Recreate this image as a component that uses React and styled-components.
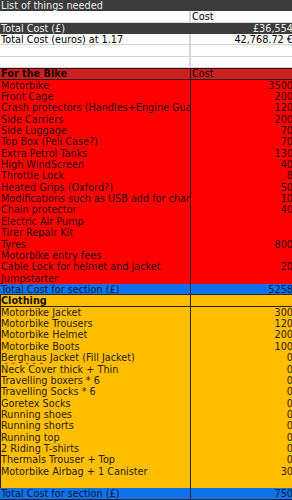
import React from "react";
import styled, { createGlobalStyle, css } from "styled-components";

const GlobalStyle = createGlobalStyle`
  html, body {
    margin: 0;
    padding: 0;
    background: #ffffff;
    overflow: hidden;
  }
`;

const tones = {
  title: { bg: "#3c3c3c", fg: "#ececec", divider: "transparent" },
  blank: { bg: "#ffffff", fg: "#000000", divider: "#d6d6d6", line: "#d6d6d6" },
  dark: { bg: "#3c3c3c", fg: "#ececec", divider: "transparent" },
  head: { bg: "#c9211e", fg: "#1a0000", divider: "#3a0a0a", top: "#3a0a0a", line: "#3a0a0a" },
  bike: { bg: "#ff0000", fg: "#2a0000", divider: "#3a0a0a" },
  total: { bg: "#1071ec", fg: "#001a3a", divider: "#2a2a2a", line: "#2a2a2a" },
  section: { bg: "#ffbf00", fg: "#1a1200", divider: "#2a2200", line: "#2a2200", left: "#2a2200" },
  cloth: { bg: "#ffbf00", fg: "#2a2000", divider: "#2a2200", left: "#2a2200" },
};

const bike = [
  { label: "Motorbike", value: "3500" },
  { label: "Front Cage", value: "200" },
  { label: "Crash protectors (Handles+Engine Guards)", value: "120" },
  { label: "Side Carriers", value: "200" },
  { label: "Side Luggage", value: "70" },
  { label: "Top Box (Peli Case?)", value: "70" },
  { label: "Extra Petrol Tanks", value: "130" },
  { label: "High WindScreen", value: "40" },
  { label: "Throttle Lock", value: "8" },
  { label: "Heated Grips (Oxford?)", value: "50" },
  { label: "Modifications such as USB add for charging", value: "10" },
  { label: "Chain protector", value: "40" },
  { label: "Electric Air Pump", value: "" },
  { label: "Tirer Repair Kit", value: "" },
  { label: "Tyres", value: "800" },
  { label: "Motorbike entry fees", value: "" },
  { label: "Cable Lock for helmet and jacket", value: "20" },
  { label: "Jumpstarter", value: "" },
];

const clothing = [
  { label: "Motorbike Jacket", value: "300" },
  { label: "Motorbike Trousers", value: "120" },
  { label: "Motorbike Helmet", value: "200" },
  { label: "Motorbike Boots", value: "100" },
  { label: "Berghaus", rest: " Jacket (Fill Jacket)", typo: true, value: "0" },
  { label: "Neck Cover thick + Thin", value: "0" },
  { label: "Travelling boxers * 6", value: "0" },
  { label: "Travelling Socks * 6", value: "0" },
  { label: "Goretex", rest: " Socks", typo: true, value: "0" },
  { label: "Running shoes", value: "0" },
  { label: "Running shorts", value: "0" },
  { label: "Running top", value: "0" },
  { label: "2 Riding T-shirts", value: "0" },
  { label: "Thermals Trouser + Top", value: "0" },
  { label: "Motorbike Airbag + 1 Canister", value: "30" },
  { label: "", value: "" },
];

function Cells({ tone, label, value, bold, valueLeft, children }) {
  return (
    <Row $tone={tone}>
      <Label $tone={tone} $bold={bold}>
        {children || label}
      </Label>
      <Value $left={valueLeft}>{value}</Value>
    </Row>
  );
}

function App() {
  return (
    <>
      <GlobalStyle />
      <Sheet>
        <TitleRow>List of things needed</TitleRow>
        <Cells tone="blank" label="" value="Cost" valueLeft />
        <Cells tone="dark" label="Total Cost (£)" value="£36,554" />
        <Cells tone="blank" label="Total Cost (euros) at 1.17" value="42,768.72 €" />
        <Cells tone="blank" label="" value="" />
        <Cells tone="blank" label="" value="" />
        <Cells tone="head" label="For the Bike" value="Cost" bold valueLeft />
        {bike.map((item) => (
          <Cells key={item.label} tone="bike" label={item.label} value={item.value} />
        ))}
        <Cells tone="total" label="Total Cost for section (£)" value="5258" />
        <Cells tone="section" label="Clothing" value="" bold />
        {clothing.map((item, i) => (
          <Cells key={i} tone="cloth" value={item.value}>
            {item.typo ? (
              <>
                <Typo>{item.label}</Typo>
                {item.rest}
              </>
            ) : (
              item.label
            )}
          </Cells>
        ))}
        <Cells tone="total" label="Total Cost for section (£)" value="750" />
      </Sheet>
    </>
  );
}

const ROW = "11.37px";

const Sheet = styled.div`
  width: 292px;
  overflow: hidden;
  font-family: "DejaVu Sans", "Noto Sans", sans-serif;
  font-size: 9.7px;
`;

const TitleRow = styled.div`
  height: ${ROW};
  line-height: ${ROW};
  background: ${tones.title.bg};
  color: ${tones.title.fg};
  padding-left: 1px;
  box-sizing: border-box;
  white-space: nowrap;
`;

const Row = styled.div`
  display: grid;
  grid-template-columns: 191px 104px;
  height: ${ROW};
  box-sizing: border-box;
  background: ${({ $tone }) => tones[$tone].bg};
  color: ${({ $tone }) => tones[$tone].fg};
  ${({ $tone }) =>
    tones[$tone].line &&
    css`
      box-shadow: inset 0 -1px 0 ${tones[$tone].line}
        ${tones[$tone].top ? `, inset 0 1px 0 ${tones[$tone].top}` : ""};
    `}
`;

const Label = styled.div`
  overflow: hidden;
  white-space: nowrap;
  line-height: ${ROW};
  padding-left: 1px;
  font-weight: ${({ $bold }) => ($bold ? 700 : 400)};
  border-right: 1px solid ${({ $tone }) => tones[$tone].divider};
  ${({ $tone }) =>
    tones[$tone].left &&
    css`
      box-shadow: inset 1px 0 0 ${tones[$tone].left};
    `}
  ${({ $tone }) =>
    $tone === "blank" &&
    css`
      border-right-width: 2px;
    `}
`;

const Value = styled.div`
  overflow: hidden;
  white-space: nowrap;
  line-height: ${ROW};
  text-align: ${({ $left }) => ($left ? "left" : "right")};
  padding: 0 2px 0 1px;
`;

const Typo = styled.span`
  text-decoration: underline wavy #e02020;
  text-decoration-thickness: 1px;
  text-underline-offset: 1px;
`;

export default App;
